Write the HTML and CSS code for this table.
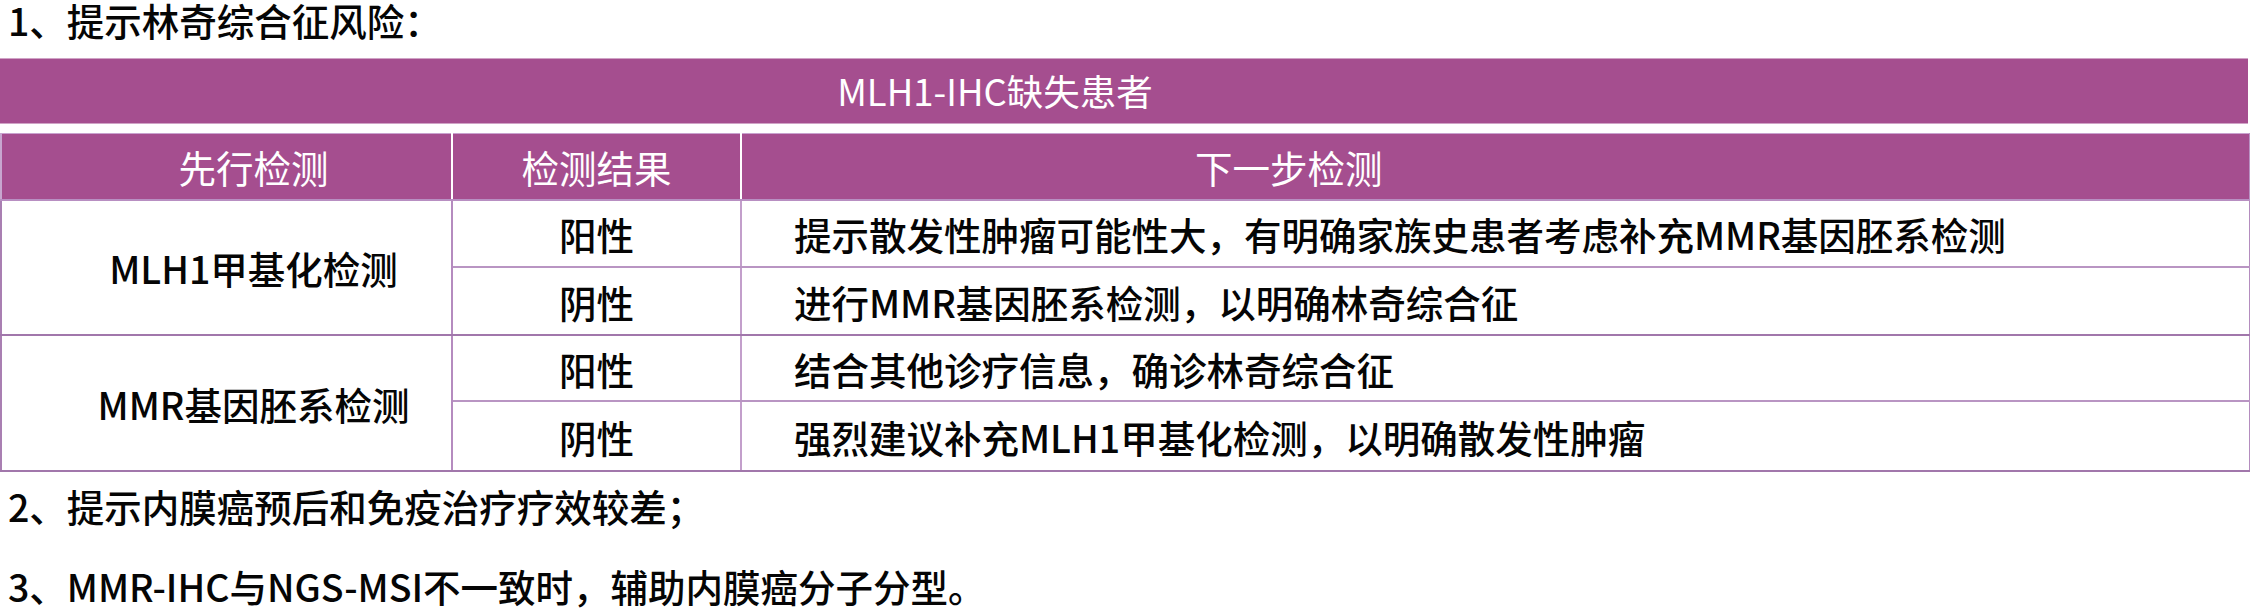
FILE: index.html
```html
<!DOCTYPE html>
<html lang="zh-CN">
<head>
<meta charset="utf-8">
<title>MLH1-IHC缺失患者</title>
<link rel="stylesheet" href="styles.css">
</head>
<body>
<div class="page">
  <p class="line title">1、提示林奇综合征风险：</p>
  <div class="banner">MLH1-IHC缺失患者</div>
  <table class="grid">
    <colgroup>
      <col class="c1">
      <col class="c2">
      <col class="c3">
    </colgroup>
    <thead>
      <tr>
        <th class="h1">先行检测</th>
        <th class="h2">检测结果</th>
        <th class="h3">下一步检测</th>
      </tr>
    </thead>
    <tbody>
      <tr class="r1">
        <td rowspan="2" class="test">MLH1甲基化检测</td>
        <td class="res">阳性</td>
        <td class="next">提示散发性肿瘤可能性大，有明确家族史患者考虑补充MMR基因胚系检测</td>
      </tr>
      <tr class="r2">
        <td class="res">阴性</td>
        <td class="next">进行MMR基因胚系检测，以明确林奇综合征</td>
      </tr>
      <tr class="r3">
        <td rowspan="2" class="test">MMR基因胚系检测</td>
        <td class="res">阳性</td>
        <td class="next">结合其他诊疗信息，确诊林奇综合征</td>
      </tr>
      <tr class="r4">
        <td class="res">阴性</td>
        <td class="next">强烈建议补充MLH1甲基化检测，以明确散发性肿瘤</td>
      </tr>
    </tbody>
  </table>
  <p class="line l2">2、提示内膜癌预后和免疫治疗疗效较差；</p>
  <p class="line l3">3、MMR-IHC与NGS-MSI不一致时，辅助内膜癌分子分型。</p>
</div>
</body>
</html>
```

FILE: styles.css
```css
html, body {
  margin: 0;
  padding: 0;
  background: #ffffff;
}

body {
  font-family: "Noto Sans CJK SC", "Noto Sans", sans-serif;
  color: #050505;
}

.page {
  width: 2250px;
  display: flex;
  flex-direction: column;
}

.line {
  margin: 0;
  padding-left: 8px;
  height: 54px;
  line-height: 54px;
  font-size: 37.5px;
  font-weight: 500;
  white-space: nowrap;
}

.title {
  margin-top: -7px;
  margin-bottom: 11px;
}

.banner {
  box-sizing: border-box;
  width: 2248px;
  height: 66px;
  line-height: 64px;
  background: #a54e8f;
  border-top: 1px solid #d0a3c6;
  border-bottom: 1px solid #d0a3c6;
  color: #ffffff;
  font-size: 36.5px;
  text-align: center;
  padding-right: 258px;
  margin-bottom: 9px;
}

.grid {
  border-collapse: collapse;
  table-layout: fixed;
  width: 2249px;
  font-size: 37.5px;
}

.c1 { width: 451px; }
.c2 { width: 289px; }
.c3 { width: 1509px; }

.grid th {
  height: 65px;
  padding: 0;
  background: #a54e8f;
  color: #ffffff;
  font-weight: normal;
  border-top: 1px solid #c9a2cf;
  border-left: 2px solid #ffffff;
  border-bottom: 2px solid #b88fc2;
  white-space: nowrap;
}

.grid th.h1 {
  border-left: 2px solid #c7a6cf;
  text-align: center;
  padding-left: 54px;
}

.grid th.h2 {
  text-align: center;
}

.grid th.h3 {
  text-align: left;
  padding-left: 453px;
  border-right: 2px solid #b993c3;
}

.grid td {
  padding: 0;
  border: 2px solid #b58bbf;
  white-space: nowrap;
  background: #ffffff;
  font-weight: 500;
}

.grid td.test {
  text-align: center;
  padding-left: 54px;
  border-left: 2px solid #a97fb2;
  border-bottom: 2px solid #a177ab;
}

.grid td.res {
  text-align: center;
  border-left: 2px solid #c39fcb;
  border-right: 2px solid #c39fcb;
}

.grid td.next {
  text-align: left;
  padding-left: 52px;
  border-right: 2px solid #b48cbe;
}

.r1 { height: 67px; }
.r2 { height: 68px; }
.r3 { height: 66px; }
.r4 { height: 70px; }

.r2 td,
.r4 td {
  border-bottom: 2px solid #a177ab;
}

.r1 td.res,
.r1 td.next,
.r3 td.res,
.r3 td.next {
  border-bottom: 2px solid #b995c3;
}

.l2 {
  margin-top: 7px;
}

.l3 {
  margin-top: 26px;
}
```
